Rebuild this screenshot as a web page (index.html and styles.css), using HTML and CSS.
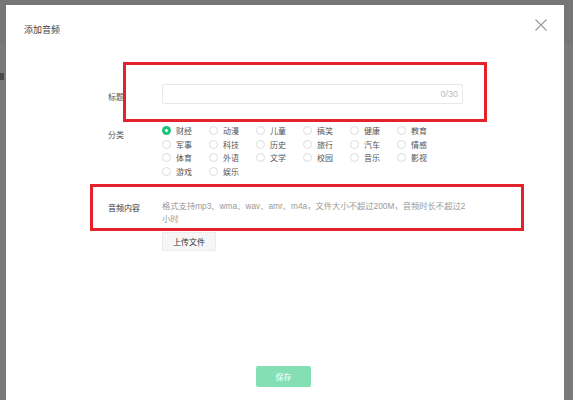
FILE: index.html
```html
<!DOCTYPE html>
<html lang="zh">
<head>
<meta charset="utf-8">
<title>添加音频</title>
<link rel="stylesheet" href="styles.css">
</head>
<body>
<div class="page">
  <div class="page-header"></div>
  <div class="page-frag"></div>
</div>
<div class="modal">
  <div class="modal-header">
    <div class="modal-title">添加音频</div>
    <svg class="close" width="12" height="12" viewBox="0 0 12 12"><path d="M0.5 0.5L11.5 11.5M11.5 0.5L0.5 11.5" stroke="#9a9a9a" stroke-width="1.1" fill="none"/></svg>
  </div>
  <div class="form">
    <div class="row row-title">
      <div class="label">标题</div>
      <div class="input"><span class="count">0/30</span></div>
    </div>
    <div class="row row-cat">
      <div class="label label-cat">分类</div>
      <div class="radios">
        <div class="radio checked"><span class="dot"></span>财经</div>
        <div class="radio"><span class="dot"></span>动漫</div>
        <div class="radio"><span class="dot"></span>儿童</div>
        <div class="radio"><span class="dot"></span>搞笑</div>
        <div class="radio"><span class="dot"></span>健康</div>
        <div class="radio"><span class="dot"></span>教育</div>
        <div class="radio"><span class="dot"></span>军事</div>
        <div class="radio"><span class="dot"></span>科技</div>
        <div class="radio"><span class="dot"></span>历史</div>
        <div class="radio"><span class="dot"></span>旅行</div>
        <div class="radio"><span class="dot"></span>汽车</div>
        <div class="radio"><span class="dot"></span>情感</div>
        <div class="radio"><span class="dot"></span>体育</div>
        <div class="radio"><span class="dot"></span>外语</div>
        <div class="radio"><span class="dot"></span>文学</div>
        <div class="radio"><span class="dot"></span>校园</div>
        <div class="radio"><span class="dot"></span>音乐</div>
        <div class="radio"><span class="dot"></span>影视</div>
        <div class="radio"><span class="dot"></span>游戏</div>
        <div class="radio"><span class="dot"></span>娱乐</div>
      </div>
    </div>
    <div class="row row-audio">
      <div class="label label-audio">音频内容</div>
      <div class="audio-content">
        <div class="hint">格式支持mp3、wma、wav、amr、m4a，文件大小不超过200M，音频时长不超过2小时</div>
        <div class="upload">上传文件</div>
      </div>
    </div>
  </div>
  <div class="footer">
    <div class="save">保存</div>
  </div>
</div>
<div class="mark mark-1"></div>
<div class="mark mark-2"></div>
</body>
</html>
```
FILE: styles.css
```css
html, body {
  margin: 0;
  padding: 0;
}
body {
  width: 573px;
  height: 400px;
  overflow: hidden;
  background: #7a7a7a;
  font-family: "Noto Sans CJK SC", "Noto Sans", sans-serif;
  position: relative;
}
.page-header {
  height: 44px;
  background: #767676;
}
.page-frag {
  position: absolute;
  left: 0;
  top: 73px;
  width: 4px;
  height: 7px;
  background: #4a4a4a;
}
.modal {
  position: absolute;
  left: 6px;
  top: 5px;
  width: 558px;
  height: 395px;
  background: #fff;
}
.modal-header {
  padding: 20px 18px 0;
  position: relative;
}
.modal-title {
  font-size: 9px;
  line-height: 10px;
  color: #444;
}
.close {
  position: absolute;
  right: 17px;
  top: 14px;
}
.form {
  margin-top: 49px;
  padding-left: 102px;
}
.row {
  display: flex;
}
.label {
  width: 54px;
  flex: none;
  font-size: 8px;
  color: #555;
}
.row-title {
  align-items: center;
  height: 20px;
}
.row-title .label {
  padding-top: 4px;
}
.input {
  box-sizing: border-box;
  width: 301px;
  height: 20px;
  border: 1px solid #e8e8e8;
  border-radius: 2px;
  display: flex;
  align-items: center;
  justify-content: flex-end;
  padding-right: 4px;
}
.count {
  font-family: "Liberation Sans", sans-serif;
  font-size: 9px;
  color: #bbb;
}
.row-cat {
  margin-top: 20px;
}
.label-cat {
  padding-top: 4px;
  line-height: 13.5px;
}
.radios {
  display: grid;
  grid-template-columns: repeat(6, 47px);
  grid-auto-rows: 13.5px;
}
.radio {
  display: flex;
  align-items: center;
  gap: 5px;
  font-size: 8px;
  color: #555;
}
.dot {
  box-sizing: border-box;
  width: 9px;
  height: 9px;
  border-radius: 50%;
  border: 1px solid #dcdcdc;
  flex: none;
}
.radio.checked .dot {
  border: none;
  background: #1fc276;
  position: relative;
}
.radio.checked .dot::after {
  content: "";
  position: absolute;
  left: 3px;
  top: 3px;
  width: 3px;
  height: 3px;
  border-radius: 50%;
  background: #fff;
}
.row-audio {
  margin-top: 22px;
}
.label-audio {
  color: #333;
  line-height: 13px;
  padding-top: 1px;
}
.audio-content {
  width: 310px;
}
.hint {
  font-family: "Liberation Sans", "Noto Sans CJK SC", sans-serif;
  font-size: 8.3px;
  line-height: 13px;
  color: #999;
}
.upload {
  margin-top: 6px;
  box-sizing: border-box;
  width: 54px;
  height: 19px;
  background: #f6f6f6;
  border: 1px solid #ececec;
  font-size: 8px;
  color: #333;
  display: flex;
  align-items: center;
  justify-content: center;
}
.footer {
  margin-top: 115px;
  display: flex;
  justify-content: center;
}
.save {
  width: 55px;
  height: 21px;
  background: #84e0b4;
  border-radius: 2px;
  color: #fff;
  font-size: 8px;
  display: flex;
  align-items: center;
  justify-content: center;
  margin-right: 3px;
}
.mark {
  position: absolute;
  box-sizing: border-box;
  border: 3px solid #e3222c;
}
.mark-1 {
  left: 123px;
  top: 62px;
  width: 364px;
  height: 60px;
}
.mark-2 {
  left: 90px;
  top: 184px;
  width: 434px;
  height: 47px;
}
```
